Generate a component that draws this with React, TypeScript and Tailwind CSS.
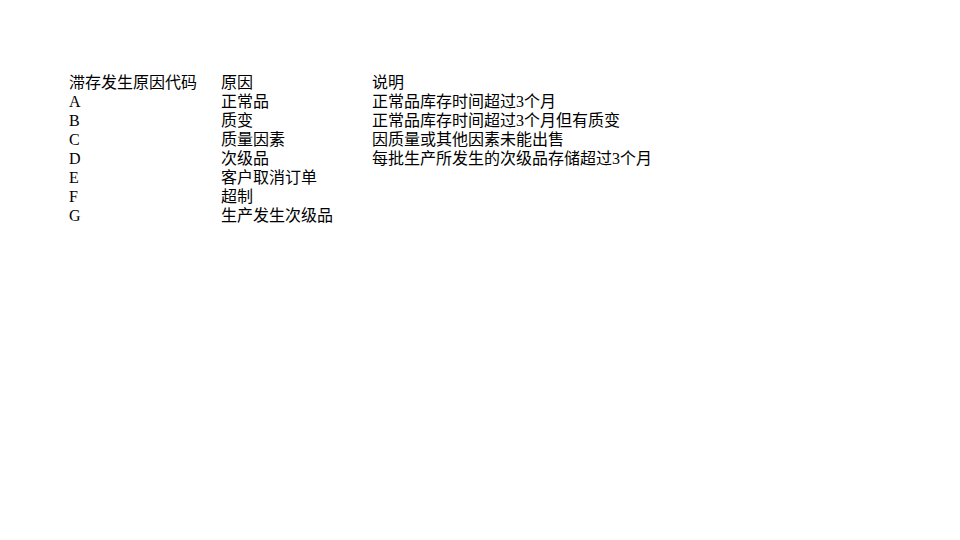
const rows: [string, string, string][] = [
  ['滞存发生原因代码', '原因', '说明'],
  ['A', '正常品', '正常品库存时间超过3个月'],
  ['B', '质变', '正常品库存时间超过3个月但有质变'],
  ['C', '质量因素', '因质量或其他因素未能出售'],
  ['D', '次级品', '每批生产所发生的次级品存储超过3个月'],
  ['E', '客户取消订单', ''],
  ['F', '超制', ''],
  ['G', '生产发生次级品', ''],
];

export default function App() {
  return (
    <div
      className="w-[960px] h-[540px] bg-white text-black pt-[73px] pl-[69px]"
      style={{ fontFamily: '"Liberation Serif", "Noto Sans CJK SC", serif' }}
    >
      <div className="grid grid-cols-[152px_151px_auto] text-[16px] leading-[19px]">
        {rows.map((r, i) => (
          <div key={i} className="contents">
            <div className="whitespace-nowrap">{r[0]}</div>
            <div className="whitespace-nowrap">{r[1]}</div>
            <div className="whitespace-nowrap">{r[2]}</div>
          </div>
        ))}
      </div>
    </div>
  );
}
